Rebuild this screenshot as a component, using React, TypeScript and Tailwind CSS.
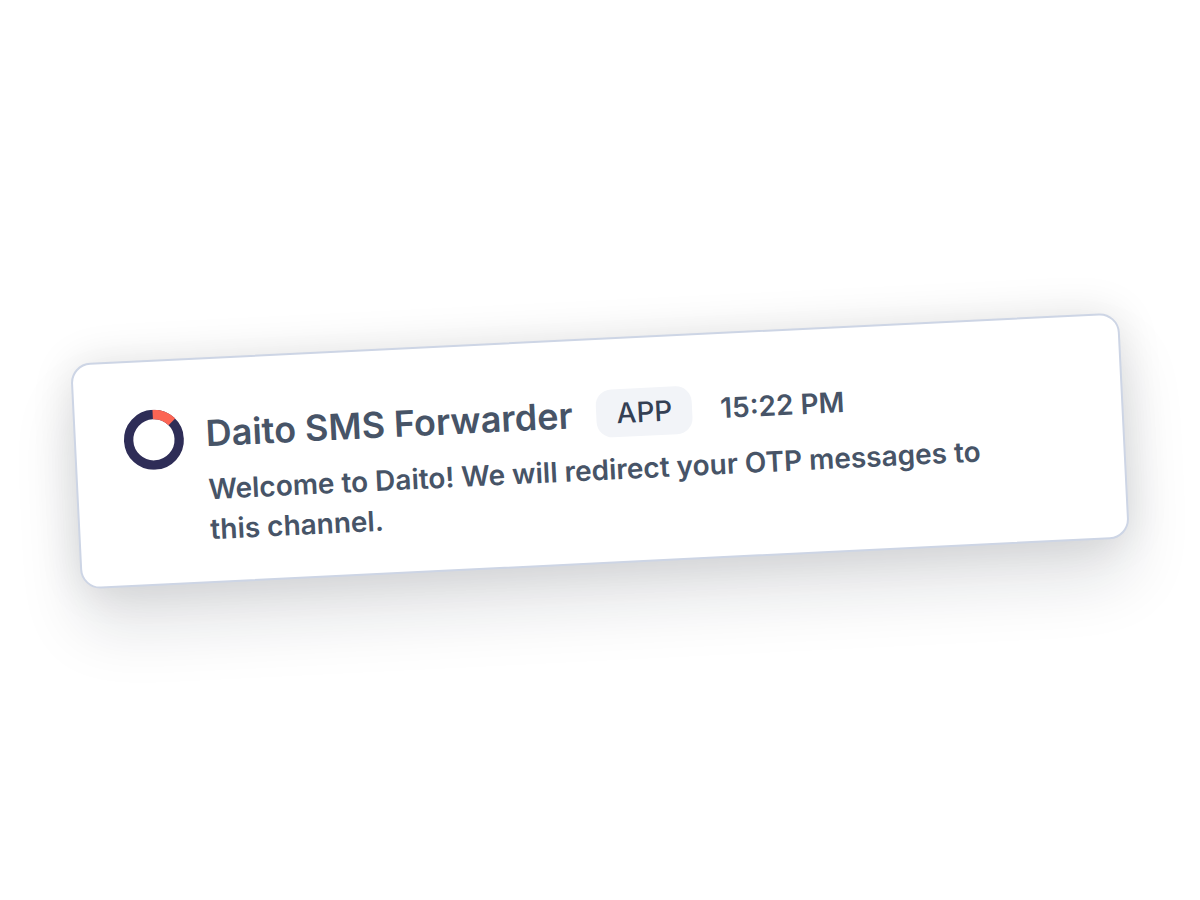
function DaitoLogo({ className }: { className?: string }) {
  return (
    <svg viewBox="0 0 60 60" fill="none" strokeWidth="9.4" className={className} aria-hidden="true">
      <circle cx="30" cy="30" r="25.3" stroke="#2e2d57" />
      <path d="M30 4.7A25.3 25.3 0 0 1 48.8 13" stroke="#fc6554" />
    </svg>
  );
}

function MessageCard() {
  return (
    <article className="flex w-full -rotate-[2.8deg] items-start gap-[22px] rounded-[20px] border-2 border-[#cdd5e5] bg-white pt-12 pr-24 pb-8 pl-12 font-semibold text-[#475467] shadow-[0_0_44px_rgba(0,0,0,0.11),0_40px_64px_rgba(16,24,40,0.12)]">
      <DaitoLogo className="size-[60px] shrink-0" />
      <div>
        <header className="flex flex-wrap items-center text-[28px]">
          <h1 className="text-4xl leading-[52px]">Daito SMS Forwarder</h1>
          <span className="ml-6 rounded-2xl bg-[#f2f4f8] px-5 leading-[48px] font-medium text-[#344054]">APP</span>
          <time className="ml-7">15:22 PM</time>
        </header>
        <p className="mt-[10px] text-[28px] leading-10">
          Welcome to Daito! We will redirect your OTP messages to this channel.
        </p>
      </div>
    </article>
  );
}

export default function App() {
  return (
    <main className="flex min-h-screen items-center overflow-hidden bg-white px-[75px] pt-0.5 font-['Inter',sans-serif]">
      <MessageCard />
    </main>
  );
}
